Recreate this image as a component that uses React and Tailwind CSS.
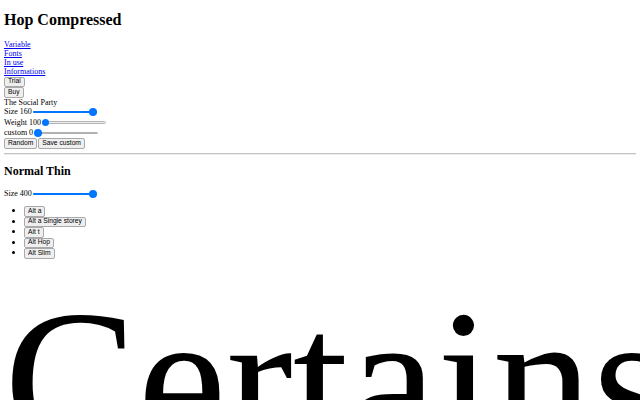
const links = ["Variable", "Fonts", "In use", "Informations"];
const alts = ["Alt a", "Alt a Single storey", "Alt t", "Alt Hop", "Alt Slim"];

function Btn({ children }) {
  return (
    <button className="h-[10.5px] px-[3px] border border-[#a9a9a9] rounded-[2px] bg-[#efefef] font-['Liberation_Sans',Arial,sans-serif] text-[6.7px] leading-none text-black align-top">
      {children}
    </button>
  );
}

// percent = where the thumb sits along the track
function Slider({ percent }) {
  return (
    <span className="relative inline-block w-[64px] h-[8px] mx-[1px] align-middle">
      <span className="absolute left-0 right-0 top-[3px] h-[2.5px] rounded-full bg-[#efefef] border-[0.5px] border-[#b2b2b2]" />
      <span
        className="absolute left-0 top-[3px] h-[2.5px] rounded-full bg-[#0075ff]"
        style={{ width: `${percent}%` }}
      />
      <span
        className="absolute top-[0.5px] w-[7.5px] h-[7.5px] -ml-[3.75px] rounded-full bg-[#0075ff]"
        style={{ left: `calc(3.75px + (100% - 7.5px) * ${percent / 100})` }}
      />
    </span>
  );
}

function Row({ label, percent }) {
  return (
    <div className="h-[10.5px] flex items-center">
      <span>{label}</span>
      <Slider percent={percent} />
    </div>
  );
}

export default function App() {
  return (
    <div className="h-screen overflow-hidden bg-white text-black font-['Liberation_Serif','Times_New_Roman',serif] text-[8px] leading-[1.15]">
      <div className="px-[4px]">
        <h1 className="pt-[10.7px] pb-[10.7px] text-[16px] font-bold leading-[1.15]">Hop Compressed</h1>

        <nav>
          {links.map((l) => (
            <a key={l} href="#" className="block text-[#0000ee] underline">
              {l}
            </a>
          ))}
        </nav>
        <div className="h-[10.5px]"><Btn>Trial</Btn></div>
        <div className="h-[10.5px]"><Btn>Buy</Btn></div>

        <div>The Social Party</div>
        <Row label="Size 160" percent={100} />
        <Row label="Weight 100" percent={0} />
        <Row label="custom 0" percent={0} />
        <div className="h-[10.5px] flex gap-[1px]">
          <Btn>Random</Btn>
          <Btn>Save custom</Btn>
        </div>

        <hr className="my-[4px] border-t border-t-[#c2c2c2] border-b border-b-[#ededed] h-0" />

        <h2 className="pt-[6px] pb-[10px] text-[12px] font-bold leading-[1.15]">Normal Thin</h2>
        <Row label="Size 400" percent={100} />

        <ul className="mt-[6px] mb-[7px] pl-[20px] list-disc marker:text-[9px]">
          {alts.map((a) => (
            <li key={a} className="h-[10.5px]">
              <Btn>{a}</Btn>
            </li>
          ))}
        </ul>

        <div className="whitespace-nowrap text-[200px] leading-[1.15]">
          Certains
        </div>
      </div>
    </div>
  );
}
